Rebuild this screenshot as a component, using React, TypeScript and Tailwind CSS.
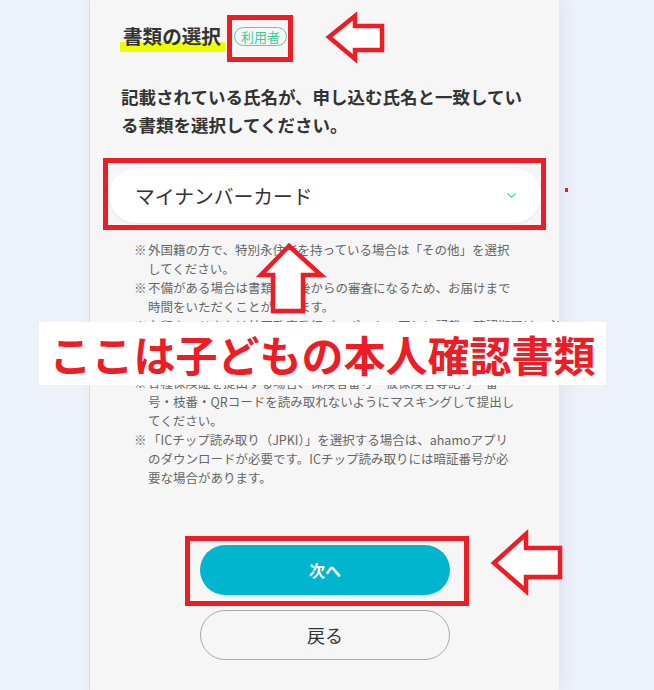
import { ChevronDown } from "lucide-react";

const notes: string[][] = [
  ["外国籍の方で、特別永住者を持っている場合は「その他」を選択", "してください。"],
  ["不備がある場合は書類到着後からの審査になるため、お届けまで", "時間をいただくことがあります。"],
  [
    "在留カードまたは外国政府発行パスポートの写しに記載の確認期限は、必",
    "ずお申込み日から3ヶ月以上の期間が残っている書類をご提出く",
    "ださい。",
  ],
  [
    "各種保険証を提出する場合、保険者番号・被保険者等記号・番",
    "号・枝番・QRコードを読み取れないようにマスキングして提出し",
    "てください。",
  ],
  [
    "「ICチップ読み取り（JPKI）」を選択する場合は、ahamoアプリ",
    "のダウンロードが必要です。ICチップ読み取りには暗証番号が必",
    "要な場合があります。",
  ],
];

export default function App() {
  return (
    <div className="relative w-[654px] h-[690px] overflow-hidden bg-[#edf1f9] font-['Noto_Sans_CJK_JP',sans-serif]">
      {/* Form panel */}
      <div className="ml-[89px] w-[470px] h-full bg-[#f6f6f6] border-l border-[#d9dce3] shadow-[6px_0_14px_rgba(60,80,130,0.07)] pt-[22px]">
        {/* Title */}
        <div className="flex items-center ml-[33px] h-[28px]">
          <span className="relative inline-block">
            <span className="absolute left-[-3px] right-[-4px] top-[20px] h-[10px] bg-[#eaff00]" />
            <span className="relative text-[19.6px] leading-[28px] font-bold text-[#333]">書類の選択</span>
          </span>
          <span className="ml-[13px] h-[19px] px-[6px] flex items-center rounded-full border-[1.5px] border-[#44d9a6] text-[13px] leading-none text-[#38cf9c]">
            利用者
          </span>
        </div>

        {/* Description */}
        <div className="mt-[33px] ml-[31px] text-[17.5px] leading-[28px] font-bold text-[#333]">
          <div className="whitespace-nowrap">記載されている氏名が、申し込む氏名と一致してい</div>
          <div className="whitespace-nowrap">る書類を選択してください。</div>
        </div>

        {/* Select */}
        <div className="mt-[29px] ml-[19px] w-[432px] h-[55px] rounded-full bg-white shadow-[0_1px_3px_rgba(0,0,0,0.07)] flex items-center justify-between pl-[26px] pr-[22px]">
          <span className="text-[19.8px] text-[#333]">マイナンバーカード</span>
          <ChevronDown size={15} strokeWidth={2} className="text-[#3fd6a2]" />
        </div>

        {/* Notes */}
        <div className="mt-[17px] ml-[44px] text-[12.5px] leading-[19px] text-[#666]">
          {notes.map((lines, i) => (
            <div key={i} className="flex">
              <span className="w-[14px] shrink-0">※</span>
              <div>
                {lines.map((l, j) => (
                  <div key={j} className="whitespace-nowrap">
                    {l}
                  </div>
                ))}
              </div>
            </div>
          ))}
        </div>

        {/* Buttons */}
        <div className="mt-[58px] ml-[110px] w-[250px] flex flex-col gap-[15px]">
          <button className="h-[50px] rounded-full bg-[#02b5cf] text-white text-[16px] font-bold">
            次へ
          </button>
          <button className="h-[50px] rounded-full border border-[#a9a9a9] text-[#333] text-[18px]">
            戻る
          </button>
        </div>
      </div>

      {/* Annotations */}
      <div className="absolute left-[227px] top-[15px] w-[66px] h-[47px] border-[5px] border-[#ee1c24]" />
      <div className="absolute left-[103px] top-[158px] w-[443px] h-[72px] border-[5px] border-[#ee1c24]" />
      <div className="absolute left-[185px] top-[536px] w-[284px] h-[70px] border-[5px] border-[#ee1c24]" />
      <div className="absolute left-[565px] top-[188px] w-[3px] h-[4px] bg-[#ee1c24]" />

      <svg className="absolute left-0 top-0" width="654" height="690" viewBox="0 0 654 690">
        <polygon
          points="329,37 355,16 355,26 382,26 382,50 355,50 355,59"
          fill="#ffffff"
          stroke="#ee1c24"
          strokeWidth="4.5"
        />
        <polygon
          points="289,246 321,275 303,275 303,311 273,311 273,275 261,275"
          fill="#ffffff"
          stroke="#ee1c24"
          strokeWidth="4.5"
        />
        <polygon
          points="494,563 526,534 526,548 560,548 560,577 526,577 526,591"
          fill="#ffffff"
          stroke="#ee1c24"
          strokeWidth="4.5"
        />
      </svg>

      <div className="absolute left-[39px] top-[322px] w-[567px] h-[63px] bg-white flex items-center justify-center">
        <span className="text-[42px] leading-none font-bold text-[#ee1c24]">
          ここは子どもの本人確認書類
        </span>
      </div>
    </div>
  );
}
